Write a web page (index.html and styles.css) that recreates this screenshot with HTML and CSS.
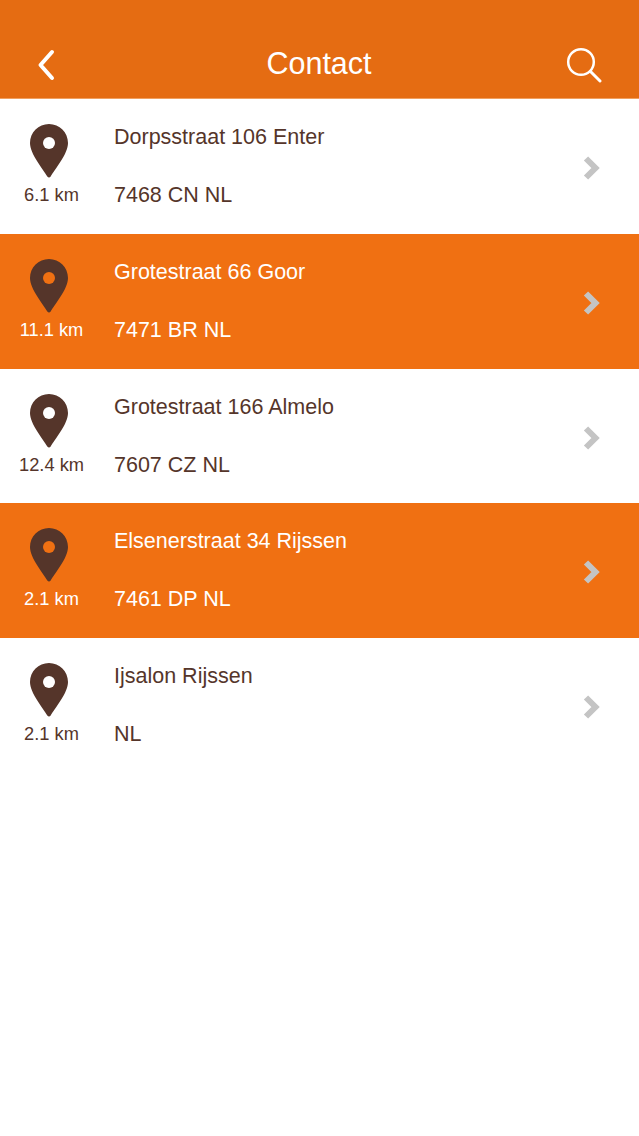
FILE: index.html
```html
<!DOCTYPE html>
<html lang="nl">
<head>
<meta charset="utf-8">
<title>Contact</title>
<link rel="stylesheet" href="styles.css">
</head>
<body>
<svg class="defs" width="0" height="0" aria-hidden="true">
  <symbol id="pin" viewBox="0 0 38 54">
    <path d="M19 0C8.500 0 0 8.500 0 19C0 30 13 45 17.500 52.700C18.200 53.800 19.800 53.800 20.500 52.700C25 45 38 30 38 19C38 8.500 29.500 0 19 0Z"/>
  </symbol>
  <symbol id="chev" viewBox="0 0 18 26">
    <path d="M3 3.500L12.500 13L3 22.500" fill="none" stroke-width="6"/>
  </symbol>
</svg>
<header class="bar">
  <svg class="back" width="20" height="32" viewBox="0 0 20 32"><path d="M16 3L4.500 16L16 29" fill="none" stroke="#fff" stroke-width="4" stroke-linecap="round" stroke-linejoin="round"/></svg>
  <h1 class="title">Contact</h1>
  <svg class="search" width="36" height="36" viewBox="0 0 36 36"><circle cx="15" cy="15" r="12.800" fill="none" stroke="#fff" stroke-width="2.500"/><path d="M24.500 24.500L34 34" fill="none" stroke="#fff" stroke-width="3" stroke-linecap="round"/></svg>
</header>
<main class="list">
  <a class="row">
    <div class="place"><span class="pin"><svg class="pin-svg" width="38" height="54"><use href="#pin"/></svg><i class="dot"></i></span><span class="km">6.1 km</span></div>
    <div class="addr"><span class="street">Dorpsstraat 106 Enter</span><span class="zip">7468 CN NL</span></div>
    <svg class="chev" width="18" height="26"><use href="#chev"/></svg>
  </a>
  <a class="row alt">
    <div class="place"><span class="pin"><svg class="pin-svg" width="38" height="54"><use href="#pin"/></svg><i class="dot"></i></span><span class="km">11.1 km</span></div>
    <div class="addr"><span class="street">Grotestraat 66 Goor</span><span class="zip">7471 BR NL</span></div>
    <svg class="chev" width="18" height="26"><use href="#chev"/></svg>
  </a>
  <a class="row">
    <div class="place"><span class="pin"><svg class="pin-svg" width="38" height="54"><use href="#pin"/></svg><i class="dot"></i></span><span class="km">12.4 km</span></div>
    <div class="addr"><span class="street">Grotestraat 166 Almelo</span><span class="zip">7607 CZ NL</span></div>
    <svg class="chev" width="18" height="26"><use href="#chev"/></svg>
  </a>
  <a class="row alt">
    <div class="place"><span class="pin"><svg class="pin-svg" width="38" height="54"><use href="#pin"/></svg><i class="dot"></i></span><span class="km">2.1 km</span></div>
    <div class="addr"><span class="street">Elsenerstraat 34 Rijssen</span><span class="zip">7461 DP NL</span></div>
    <svg class="chev" width="18" height="26"><use href="#chev"/></svg>
  </a>
  <a class="row">
    <div class="place"><span class="pin"><svg class="pin-svg" width="38" height="54"><use href="#pin"/></svg><i class="dot"></i></span><span class="km">2.1 km</span></div>
    <div class="addr"><span class="street">Ijsalon Rijssen</span><span class="zip">NL</span></div>
    <svg class="chev" width="18" height="26"><use href="#chev"/></svg>
  </a>
</main>
</body>
</html>
```
FILE: styles.css
```css
* { box-sizing: border-box; }
html, body { margin: 0; padding: 0; }
body {
  width: 639px;
  height: 1136px;
  overflow: hidden;
  background: #fff;
  font-family: "Liberation Sans", Arial, sans-serif;
  color: #55352a;
}
.defs { position: absolute; }
.bar {
  height: 99px;
  background: #e56c12;
  display: grid;
  grid-template-columns: 1fr auto 1fr;
  align-items: center;
  padding: 29px 37px 0 36px;
  border-bottom: 1px solid #f0a060;
}
.title {
  margin: 0 0 2px;
  font-size: 30.500px;
  font-weight: 400;
  color: #fff;
  line-height: 34px;
}
.back { display: block; margin-top: 2px; }
.search { display: block; margin-top: 2px; justify-self: end; }
.list { display: flex; flex-direction: column; }
.row {
  height: 134.750px;
  display: flex;
  align-items: flex-start;
  padding-left: 11px;
  padding-right: 38px;
  background: #fff;
}
.row.alt { background: #f07012; color: #fff; }
.place {
  width: 81px;
  display: flex;
  flex-direction: column;
  align-items: center;
  padding-top: 25px;
}
.pin { position: relative; display: block; width: 38px; height: 54px; margin-left: -5px; }
.pin-svg { display: block; fill: #55352a; }
.dot {
  position: absolute;
  left: 13px;
  top: 13px;
  width: 12px;
  height: 12px;
  border-radius: 50%;
  background: #fff;
}
.alt .dot { background: #f07012; }
.km { font-size: 18.300px; line-height: 20px; margin-top: 7px; white-space: nowrap; }
.addr { flex: 1; display: flex; flex-direction: column; padding-left: 22px; padding-top: 26px; }
.street { font-size: 21.500px; line-height: 24px; }
.zip { font-size: 21.500px; line-height: 24px; margin-top: 34px; }
.chev { display: block; margin-top: 56px; stroke: #c4c4c4; }
```
